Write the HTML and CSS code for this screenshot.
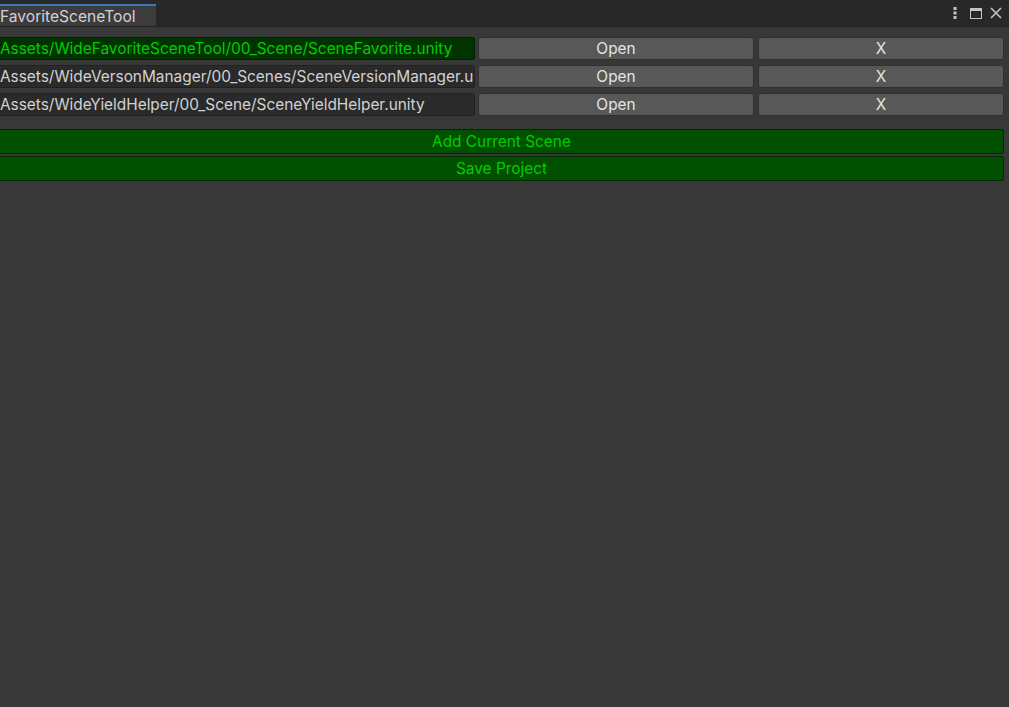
FILE: index.html
```html
<!DOCTYPE html>
<html>
<head>
<meta charset="utf-8">
<link rel="stylesheet" href="styles.css">
</head>
<body>
<div class="window">
  <div class="tabbar">
    <div class="tab">FavoriteSceneTool</div>
    <div class="tab-icons">
      <svg class="kebab" width="4" height="12" viewBox="0 0 4 12"><rect x="0.5" y="0" width="3" height="3" fill="#c4c4c4"/><rect x="0.5" y="4.5" width="3" height="3" fill="#c4c4c4"/><rect x="0.5" y="9" width="3" height="3" fill="#c4c4c4"/></svg>
      <svg width="12" height="11" viewBox="0 0 12 11"><rect x="0.5" y="0.5" width="11" height="10" fill="none" stroke="#c4c4c4"/><rect x="0.5" y="0.5" width="11" height="2.5" fill="#c4c4c4"/></svg>
      <svg width="12" height="12" viewBox="0 0 12 12"><path d="M1 1 L11 11 M11 1 L1 11" stroke="#c4c4c4" stroke-width="1.6"/></svg>
    </div>
  </div>
  <div class="content">
    <div class="rows">
      <div class="row">
        <div class="field active">Assets/WideFavoriteSceneTool/00_Scene/SceneFavorite.unity</div>
        <button class="btn open">Open</button>
        <button class="btn del">X</button>
      </div>
      <div class="row">
        <div class="field">Assets/WideVersonManager/00_Scenes/SceneVersionManager.unity</div>
        <button class="btn open">Open</button>
        <button class="btn del">X</button>
      </div>
      <div class="row">
        <div class="field">Assets/WideYieldHelper/00_Scene/SceneYieldHelper.unity</div>
        <button class="btn open">Open</button>
        <button class="btn del">X</button>
      </div>
    </div>
    <div class="actions">
      <button class="gbtn">Add Current Scene</button>
      <button class="gbtn">Save Project</button>
    </div>
  </div>
</div>
</body>
</html>
```

FILE: styles.css
```css
html, body {
  margin: 0;
  padding: 0;
  background: #383838;
  font-family: Inter, "Noto Sans", sans-serif;
  font-size: 15.4px;
  color: #d2d2d2;
}
.window {
  width: 1009px;
  height: 707px;
  display: flex;
  flex-direction: column;
}
.tabbar {
  height: 26px;
  background: #282828;
  display: flex;
  align-items: flex-end;
  justify-content: space-between;
  border-bottom: 1px solid #232323;
}
.tab {
  width: 156px;
  height: 20px;
  background: #3c3c3c;
  border-top: 2px solid #3a79bb;
  color: #d2d2d2;
  font-size: 15.6px;
  line-height: 21px;
  box-sizing: content-box;
}
.tab-icons {
  display: flex;
  align-items: center;
  align-self: flex-start;
  padding-top: 7px;
  padding-right: 7px;
}
.tab-icons svg + svg {
  margin-left: 8px;
}
.tab-icons .kebab {
  margin-right: 5px;
}
.content {
  padding-top: 10px;
  padding-right: 5px;
}
.rows {
  display: flex;
  flex-direction: column;
  gap: 5px;
}
.row {
  display: flex;
  height: 23px;
}
.field {
  width: 475px;
  box-sizing: border-box;
  background: #2a2a2a;
  border: 1px solid #212121;
  border-left: none;
  border-radius: 0 3px 3px 0;
  white-space: nowrap;
  overflow: hidden;
  line-height: 22px;
  color: #d2d2d2;
}
.field.active {
  background: #003300;
  border-color: #002000;
  color: #00cc00;
}
.btn {
  box-sizing: border-box;
  height: 23px;
  background: #585858;
  border: 1px solid #303030;
  border-radius: 3px;
  color: #e4e4e4;
  font-family: Inter, "Noto Sans", sans-serif;
  font-size: 15.4px;
  padding: 0;
  margin: 0;
  line-height: 22px;
}
.btn.open {
  width: 276px;
  margin-left: 3px;
}
.btn.del {
  width: 246px;
  margin-left: 4px;
}
.actions {
  margin-top: 13px;
  display: flex;
  flex-direction: column;
  gap: 2px;
}
.gbtn {
  box-sizing: border-box;
  width: 1004px;
  height: 25px;
  background: #005000;
  border: 1px solid #002a00;
  border-left: none;
  border-radius: 0 3px 3px 0;
  color: #00cc00;
  font-family: Inter, "Noto Sans", sans-serif;
  font-size: 15.4px;
  padding: 0;
  margin: 0;
  line-height: 23px;
}
```
